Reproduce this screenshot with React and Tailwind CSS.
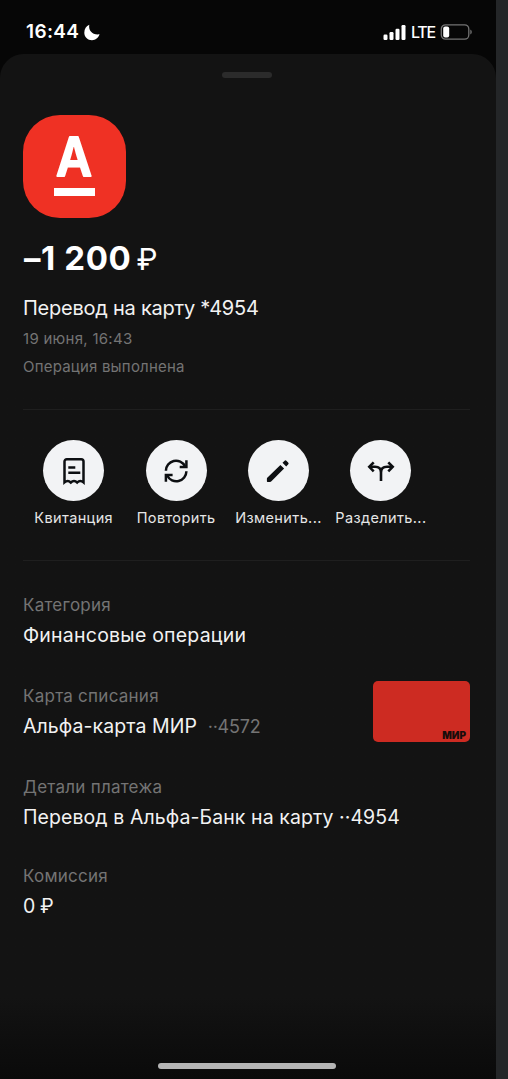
import React from 'react';

const ReceiptIcon = () => (
  <svg className="h-[28px] w-[24px]" viewBox="0 0 24 28" fill="none" stroke="#0d0f12" strokeWidth="2.5">
    <path d="M2.500 25.300V4.500a2.300 2.300 0 0 1 2.300-2.300h14.400a2.300 2.300 0 0 1 2.300 2.300v20.800q-1.600-1.400-3.200-1.400t-3.100 1.600q-1.600-1.600-3.200-1.600t-3.200 1.600q-1.600-1.600-3.100-1.600t-3.200 1.400z" />
    <path d="M6.300 10.500h7M6.300 15.700h12" />
  </svg>
);

const RepeatIcon = () => (
  <svg className="h-[26px] w-[26px]" viewBox="0 0 26 26" fill="none" stroke="#0d0f12" strokeWidth="2.500">
    <path d="M2.900 12.800A10.100 10.100 0 0 1 22 8.300" />
    <path d="M23.400 2.200v6.700h-6.700" />
    <path d="M23.400 13.200A10.100 10.100 0 0 1 4.300 17.700" />
    <path d="M2.900 23.800v-6.700h6.700" />
  </svg>
);

const PencilIcon = () => (
  <svg className="h-[24px] w-[24px]" viewBox="0 0 24 24" fill="#0d0f12">
    <path d="M14.400 5.900l3.700 3.700L5.400 22.300Q4.800 22.900 4 22.900H1.500Q.9 22.900.9 22.300V19.800Q.9 19 1.500 18.500z" />
    <path d="M16.500 3.800l1.900-1.900a1.500 1.500 0 0 1 2.200 0l1.500 1.500a1.500 1.500 0 0 1 0 2.200l-1.900 1.900z" />
  </svg>
);

const SplitIcon = () => (
  <svg className="h-[22px] w-[28px]" viewBox="0 0 28 22" fill="none" stroke="#0d0f12" strokeWidth="2.600">
    <path d="M14 21V12.500Q14 6.800 8 6.800H3M14 12.500Q14 6.800 20 6.800H25" />
    <path d="M6.700 2.300L2.300 6.800l4.400 4.500M21.300 2.300l4.400 4.500-4.400 4.500" />
  </svg>
);

const actions = [
  { label: 'Квитанция', icon: ReceiptIcon },
  { label: 'Повторить', icon: RepeatIcon },
  { label: 'Изменить...', icon: PencilIcon },
  { label: 'Разделить...', icon: SplitIcon },
];

const StatusBar = () => (
  <div className="flex h-[54px] shrink-0 items-start justify-between pl-[26px] pr-[24px] pt-[20px]">
    <div className="flex h-6 items-center gap-[5px]">
      <span className="text-[19px] font-semibold leading-6 tracking-[0.35px]">16:44</span>
      <svg className="h-[17px] w-[16px]" viewBox="0 0 16 17" fill="#fff">
        <path d="M5.300.700C4.200 6.500 8.500 11.300 15.600 10.300C14.300 14 11.500 16.200 8 16.200C3.700 16.200.3 12.900.3 8.700C.3 5 2.200 2 5.300.700z" />
      </svg>
    </div>
    <div className="flex h-6 items-center">
      <svg className="mr-[5px] h-[15px] w-[23px]" viewBox="0 0 23 15" fill="#fff">
        <rect x=".5" y="9.500" width="4" height="5.500" rx="1.200" />
        <rect x="6.500" y="7" width="4" height="8" rx="1.200" />
        <rect x="12.500" y="3.800" width="4" height="11.200" rx="1.200" />
        <rect x="18.500" y="0" width="4" height="15" rx="1.200" />
      </svg>
      <span className="w-[25px] text-[16px] font-medium leading-6 tracking-[-1.3px]">LTE</span>
      <svg className="ml-[4px] h-[16px] w-[32px]" viewBox="0 0 32 16">
        <rect x="1.300" y=".8" width="27.500" height="14.400" rx="4.200" fill="none" stroke="#737373" strokeWidth="1.300" />
        <rect x="3.200" y="2.600" width="6" height="10.800" rx="2" fill="#fff" />
        <path d="M30.300 5.500v5q1.500-.8 1.500-2.500t-1.500-2.500z" fill="#737373" />
      </svg>
    </div>
  </div>
);

const Field = ({ label, children }) => (
  <div className="h-[60px]">
    <p className="text-[17px] leading-[30px] tracking-[0.25px] text-[#747474]">{label}</p>
    <p className="whitespace-nowrap text-[19.5px] leading-[31px] tracking-[0.08px] text-[#f2f2f2]">{children}</p>
  </div>
);

export default function App() {
  return (
    <div className="flex h-[1079px] w-[508px] overflow-hidden bg-[#242628] font-['Inter','Liberation_Sans',sans-serif] text-white">
      <div className="flex w-[496px] flex-col bg-[#060606]">
        <StatusBar />

        <main className="flex flex-1 flex-col rounded-t-[24px] bg-linear-to-b from-[#131313] from-92% to-[#0a0a0a] pl-[23px] pr-[26px]">
          <div className="mx-auto mt-[18px] h-[6px] w-[50px] rounded-full bg-[#2b2b2b]" />

          {/* Bank logo */}
          <div className="-ml-[0.5px] mt-[37px] flex h-[103px] w-[103px] flex-col items-center rounded-[37px] bg-[#ef3124]">
            <svg className="mt-[7px] h-[66px] w-[60px] overflow-visible" viewBox="0 0 60 66">
              <text
                x="30"
                y="54"
                textAnchor="middle"
                textLength="36"
                lengthAdjust="spacingAndGlyphs"
                fill="#fff"
                stroke="#fff"
                strokeWidth="1.800"
                strokeLinejoin="round"
                className="text-[54px] font-semibold leading-none"
              >
                А
              </text>
            </svg>
            <span className="h-[8px] w-[41px] bg-white" />
          </div>

          {/* Operation summary */}
          <h1 className="mt-[21px] flex h-10 items-center gap-[5px] whitespace-nowrap pl-px">
            <span className="text-[33px] font-bold tracking-[0.6px]">–1 200</span>
            <span className="text-[30px] font-normal">₽</span>
          </h1>
          <p className="mt-[15px] text-[20px] leading-7 tracking-[-0.24px] text-[#f2f2f2]">Перевод на карту *4954</p>
          <p className="mt-[3px] text-[15px] leading-7 tracking-[0.28px] text-[#747474]">19 июня, 16:43</p>
          <p className="text-[15px] leading-7 tracking-[0.2px] text-[#747474]">Операция выполнена</p>

          <div className="mt-[28px] border-t border-[#1f1f1f]" />

          <div className="-ml-[0.5px] mt-[30px] flex">
            {actions.map(({ label, icon: Icon }) => (
              <div key={label} className="flex w-[102.4px] shrink-0 flex-col items-center">
                <div className="flex h-[61px] w-[61px] items-center justify-center rounded-full bg-[#f2f3f5]">
                  <Icon />
                </div>
                <span className="mt-[7px] whitespace-nowrap text-[14.5px] leading-5 tracking-[0.38px] text-[#e6e6e6]">{label}</span>
              </div>
            ))}
          </div>

          <div className="mt-[32px] border-t border-[#1f1f1f]" />

          {/* Details */}
          <section className="mt-[29px] flex flex-col gap-[31px]">
            <Field label="Категория">
              <span className="tracking-[0.22px]">Финансовые операции</span>
            </Field>
            <div className="flex h-[60px] justify-between">
              <Field label="Карта списания">
                Альфа-карта МИР <span className="ml-[5px] text-[18px] tracking-[-0.2px] text-[#747474]">··4572</span>
              </Field>
              <div className="flex h-[61px] w-[97px] items-end justify-end rounded-[5px] bg-[#cd2b22] pb-[2px] pr-[4px]">
                <span className="text-[10px] font-black leading-[9px] text-[#180c0b]">МИР</span>
              </div>
            </div>
            <Field label="Детали платежа">Перевод в Альфа-Банк на карту ··4954</Field>
            <div className="-mt-[2px]">
              <Field label="Комиссия">
                <span className="tracking-[-0.4px]">0 ₽</span>
              </Field>
            </div>
          </section>

          <div className="mx-auto mb-[10px] mt-auto h-[6px] w-[178px] rounded-full bg-[#b5b5b5]" />
        </main>
      </div>
    </div>
  );
}
